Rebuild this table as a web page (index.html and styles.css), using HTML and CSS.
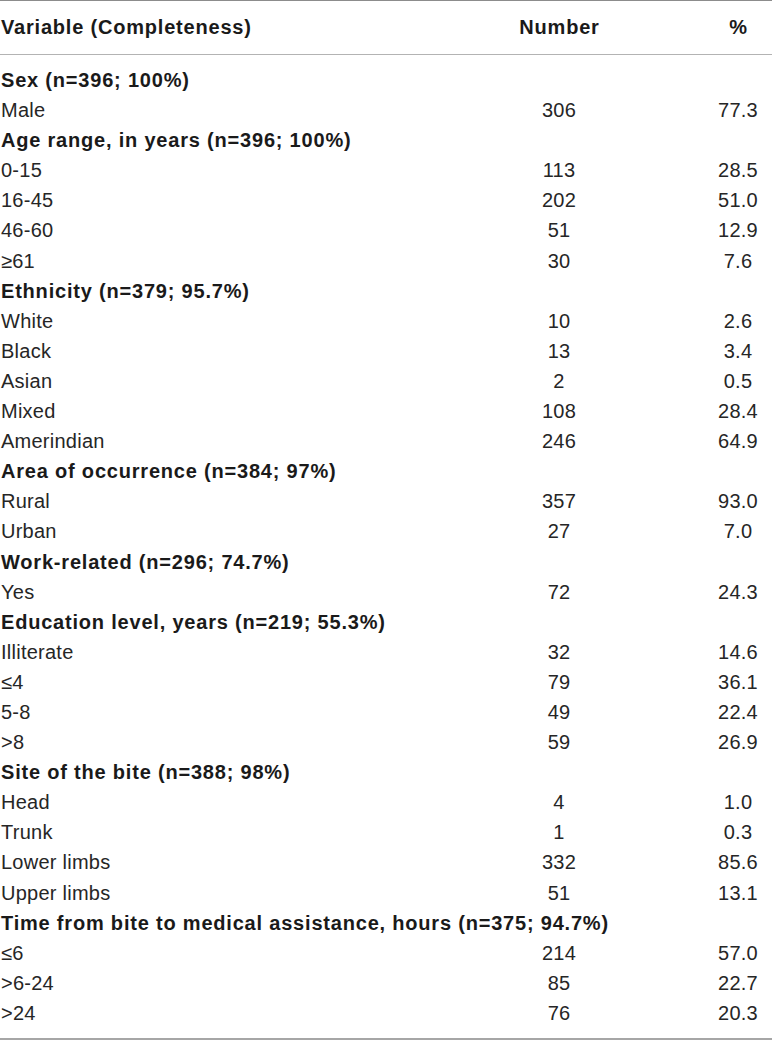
FILE: index.html
```html
<!DOCTYPE html>
<html lang="en">
<head>
    <meta charset="UTF-8">
    <meta name="viewport" content="width=device-width, initial-scale=1.0">
    <title>Patient characteristics</title>
    <link rel="stylesheet" href="styles.css">
</head>
<body>
    <table class="data-table">
        <colgroup>
            <col class="col-var">
            <col class="col-num">
            <col class="col-pct">
        </colgroup>
        <thead>
            <tr>
                <th class="var">Variable (Completeness)</th>
                <th class="num">Number</th>
                <th class="pct">%</th>
            </tr>
        </thead>
        <tbody>
            <tr class="group first"><td colspan="3">Sex (n=396; 100%)</td></tr>
            <tr><td>Male</td><td class="num">306</td><td class="pct">77.3</td></tr>

            <tr class="group"><td colspan="3">Age range, in years (n=396; 100%)</td></tr>
            <tr><td>0-15</td><td class="num">113</td><td class="pct">28.5</td></tr>
            <tr><td>16-45</td><td class="num">202</td><td class="pct">51.0</td></tr>
            <tr><td>46-60</td><td class="num">51</td><td class="pct">12.9</td></tr>
            <tr><td>&ge;61</td><td class="num">30</td><td class="pct">7.6</td></tr>

            <tr class="group"><td colspan="3">Ethnicity (n=379; 95.7%)</td></tr>
            <tr><td>White</td><td class="num">10</td><td class="pct">2.6</td></tr>
            <tr><td>Black</td><td class="num">13</td><td class="pct">3.4</td></tr>
            <tr><td>Asian</td><td class="num">2</td><td class="pct">0.5</td></tr>
            <tr><td>Mixed</td><td class="num">108</td><td class="pct">28.4</td></tr>
            <tr><td>Amerindian</td><td class="num">246</td><td class="pct">64.9</td></tr>

            <tr class="group"><td colspan="3">Area of occurrence (n=384; 97%)</td></tr>
            <tr><td>Rural</td><td class="num">357</td><td class="pct">93.0</td></tr>
            <tr><td>Urban</td><td class="num">27</td><td class="pct">7.0</td></tr>

            <tr class="group"><td colspan="3">Work-related (n=296; 74.7%)</td></tr>
            <tr><td>Yes</td><td class="num">72</td><td class="pct">24.3</td></tr>

            <tr class="group"><td colspan="3">Education level, years (n=219; 55.3%)</td></tr>
            <tr><td>Illiterate</td><td class="num">32</td><td class="pct">14.6</td></tr>
            <tr><td>&le;4</td><td class="num">79</td><td class="pct">36.1</td></tr>
            <tr><td>5-8</td><td class="num">49</td><td class="pct">22.4</td></tr>
            <tr><td>&gt;8</td><td class="num">59</td><td class="pct">26.9</td></tr>

            <tr class="group"><td colspan="3">Site of the bite (n=388; 98%)</td></tr>
            <tr><td>Head</td><td class="num">4</td><td class="pct">1.0</td></tr>
            <tr><td>Trunk</td><td class="num">1</td><td class="pct">0.3</td></tr>
            <tr><td>Lower limbs</td><td class="num">332</td><td class="pct">85.6</td></tr>
            <tr><td>Upper limbs</td><td class="num">51</td><td class="pct">13.1</td></tr>

            <tr class="group"><td colspan="3">Time from bite to medical assistance, hours (n=375; 94.7%)</td></tr>
            <tr><td>&le;6</td><td class="num">214</td><td class="pct">57.0</td></tr>
            <tr><td>&gt;6-24</td><td class="num">85</td><td class="pct">22.7</td></tr>
            <tr class="last"><td>&gt;24</td><td class="num">76</td><td class="pct">20.3</td></tr>
        </tbody>
    </table>
</body>
</html>
```

FILE: styles.css
```css
body {
    margin: 0;
    background: #fff;
    font-family: "Liberation Sans", Arial, sans-serif;
    font-size: 20px;
    color: #262626;
}
.data-table {
    width: 772px;
    border-collapse: collapse;
    table-layout: fixed;
    border-top: 1px solid #8c8c8c;
    border-bottom: 2px solid #a6a6a6;
}
.col-var {
    width: 414px;
}
.col-num {
    width: 290px;
}
.col-pct {
    width: 68px;
}
.data-table th {
    height: 53px;
    padding: 0 0 0 1px;
    font-weight: bold;
    color: #1a1a1a;
    letter-spacing: 0.8px;
    border-bottom: 1px solid #b3b3b3;
    text-align: left;
}
.data-table td {
    padding: 0;
    height: 30.1px;
    line-height: 30.1px;
    letter-spacing: 0.25px;
    white-space: nowrap;
}
.data-table td:first-child {
    padding-left: 1px;
}
.data-table .num,
.data-table .pct {
    text-align: center;
}
.group td {
    font-weight: bold;
    color: #1a1a1a;
    letter-spacing: 0.8px;
}
.first td {
    padding-top: 10px;
}
.last td {
    padding-bottom: 10px;
}
```
